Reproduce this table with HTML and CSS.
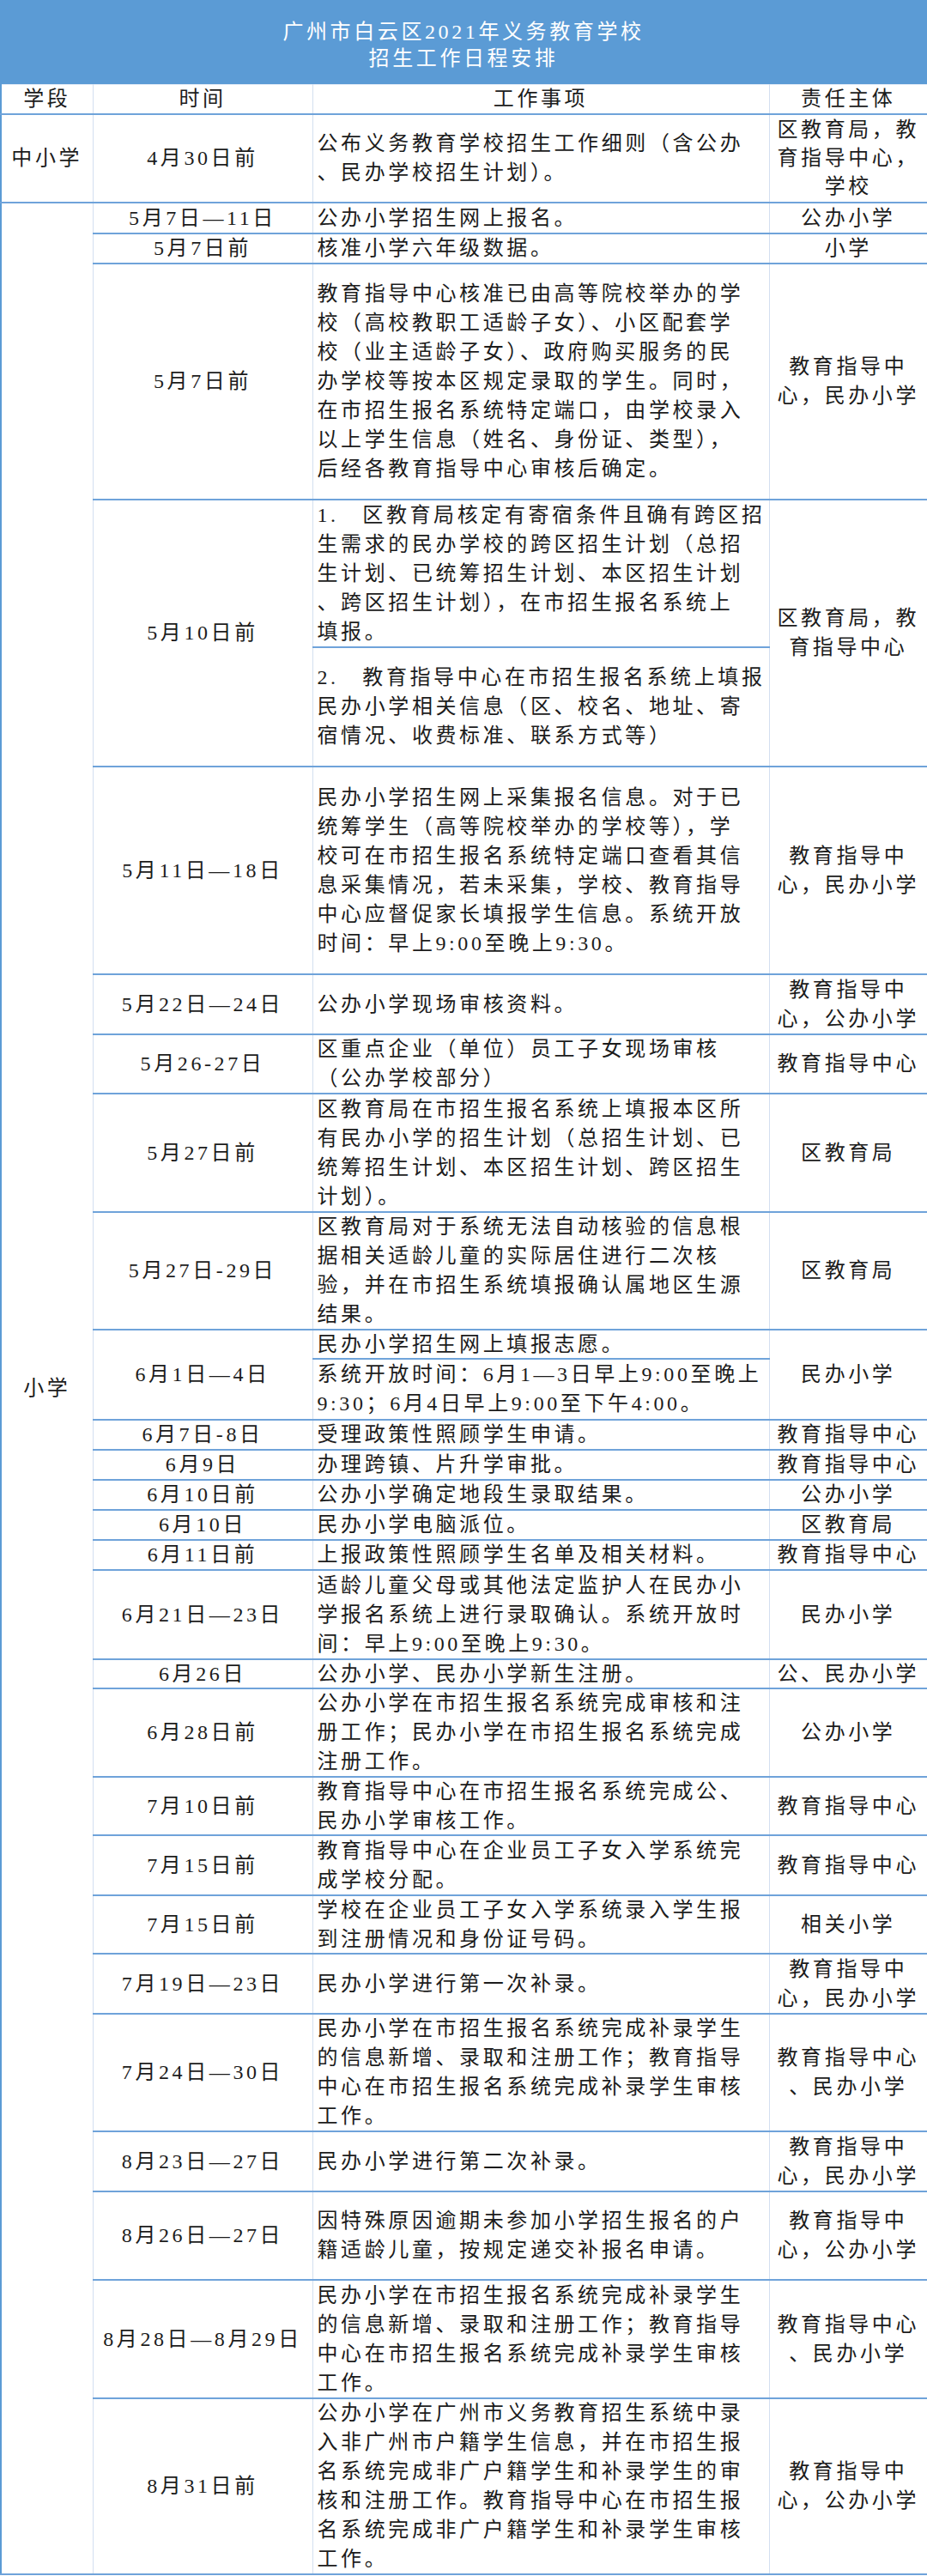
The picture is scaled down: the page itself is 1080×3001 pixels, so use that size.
FILE: index.html
```html
<!DOCTYPE html>
<html lang="zh-CN">
<head>
<meta charset="utf-8">
<title>广州市白云区2021年义务教育学校招生工作日程安排</title>
<link rel="stylesheet" href="styles.css">
</head>
<body>
<div class="page">
  <div class="banner">广州市白云区2021年义务教育学校<br>招生工作日程安排</div>
  <table class="schedule">
    <colgroup>
      <col class="c-stage"><col class="c-time"><col class="c-task"><col class="c-owner">
    </colgroup>
    <tbody>
      <tr class="h34 head"><td class="ctr"><div class="cell">学段</div></td><td class="ctr"><div class="cell">时间</div></td><td class="ctr"><div class="cell">工作事项</div></td><td class="ctr"><div class="cell">责任主体</div></td></tr>
      <tr class="h103"><td class="ctr stage"><div class="cell">中小学</div></td><td class="ctr"><div class="cell">4月30日前</div></td><td class="task"><div class="cell">公布义务教育学校招生工作细则（含公办<br>、民办学校招生计划）。</div></td><td class="ctr"><div class="cell owner">区教育局，教<br>育指导中心，<br>学校</div></td></tr>
      <tr class="h36"><td class="ctr stage" rowspan="29"><div class="cell">小学</div></td><td class="ctr"><div class="cell">5月7日—11日</div></td><td class="task"><div class="cell">公办小学招生网上报名。</div></td><td class="ctr"><div class="cell">公办小学</div></td></tr>
      <tr class="h35"><td class="ctr"><div class="cell">5月7日前</div></td><td class="task"><div class="cell">核准小学六年级数据。</div></td><td class="ctr"><div class="cell">小学</div></td></tr>
      <tr class="h275"><td class="ctr"><div class="cell">5月7日前</div></td><td class="task"><div class="cell">教育指导中心核准已由高等院校举办的学<br>校（高校教职工适龄子女）、小区配套学<br>校（业主适龄子女）、政府购买服务的民<br>办学校等按本区规定录取的学生。同时，<br>在市招生报名系统特定端口，由学校录入<br>以上学生信息（姓名、身份证、类型），<br>后经各教育指导中心审核后确定。</div></td><td class="ctr"><div class="cell">教育指导中<br>心，民办小学</div></td></tr>
      <tr class="h172"><td class="ctr" rowspan="2"><div class="cell">5月10日前</div></td><td class="task"><div class="cell">1.&emsp;区教育局核定有寄宿条件且确有跨区招<br>生需求的民办学校的跨区招生计划（总招<br>生计划、已统筹招生计划、本区招生计划<br>、跨区招生计划），在市招生报名系统上<br>填报。</div></td><td class="ctr" rowspan="2"><div class="cell">区教育局，教<br>育指导中心</div></td></tr>
      <tr class="h139"><td class="task"><div class="cell">2.&emsp;教育指导中心在市招生报名系统上填报<br>民办小学相关信息（区、校名、地址、寄<br>宿情况、收费标准、联系方式等）</div></td></tr>
      <tr class="h242"><td class="ctr"><div class="cell">5月11日—18日</div></td><td class="task"><div class="cell">民办小学招生网上采集报名信息。对于已<br>统筹学生（高等院校举办的学校等），学<br>校可在市招生报名系统特定端口查看其信<br>息采集情况，若未采集，学校、教育指导<br>中心应督促家长填报学生信息。系统开放<br>时间：早上9:00至晚上9:30。</div></td><td class="ctr"><div class="cell">教育指导中<br>心，民办小学</div></td></tr>
      <tr class="h70"><td class="ctr"><div class="cell">5月22日—24日</div></td><td class="task"><div class="cell">公办小学现场审核资料。</div></td><td class="ctr"><div class="cell">教育指导中<br>心，公办小学</div></td></tr>
      <tr class="h69"><td class="ctr"><div class="cell">5月26-27日</div></td><td class="task"><div class="cell">区重点企业（单位）员工子女现场审核<br>（公办学校部分）</div></td><td class="ctr"><div class="cell">教育指导中心</div></td></tr>
      <tr class="h138"><td class="ctr"><div class="cell">5月27日前</div></td><td class="task"><div class="cell">区教育局在市招生报名系统上填报本区所<br>有民办小学的招生计划（总招生计划、已<br>统筹招生计划、本区招生计划、跨区招生<br>计划）。</div></td><td class="ctr"><div class="cell">区教育局</div></td></tr>
      <tr class="h137"><td class="ctr"><div class="cell">5月27日-29日</div></td><td class="task"><div class="cell">区教育局对于系统无法自动核验的信息根<br>据相关适龄儿童的实际居住进行二次核<br>验，并在市招生系统填报确认属地区生源<br>结果。</div></td><td class="ctr"><div class="cell">区教育局</div></td></tr>
      <tr class="h34"><td class="ctr" rowspan="2"><div class="cell">6月1日—4日</div></td><td class="task"><div class="cell">民办小学招生网上填报志愿。</div></td><td class="ctr" rowspan="2"><div class="cell">民办小学</div></td></tr>
      <tr class="h71"><td class="task"><div class="cell">系统开放时间：6月1—3日早上9:00至晚上<br>9:30；6月4日早上9:00至下午4:00。</div></td></tr>
      <tr class="h35"><td class="ctr"><div class="cell">6月7日-8日</div></td><td class="task"><div class="cell">受理政策性照顾学生申请。</div></td><td class="ctr"><div class="cell">教育指导中心</div></td></tr>
      <tr class="h35"><td class="ctr"><div class="cell">6月9日</div></td><td class="task"><div class="cell">办理跨镇、片升学审批。</div></td><td class="ctr"><div class="cell">教育指导中心</div></td></tr>
      <tr class="h35"><td class="ctr"><div class="cell">6月10日前</div></td><td class="task"><div class="cell">公办小学确定地段生录取结果。</div></td><td class="ctr"><div class="cell">公办小学</div></td></tr>
      <tr class="h35"><td class="ctr"><div class="cell">6月10日</div></td><td class="task"><div class="cell">民办小学电脑派位。</div></td><td class="ctr"><div class="cell">区教育局</div></td></tr>
      <tr class="h35"><td class="ctr"><div class="cell">6月11日前</div></td><td class="task"><div class="cell">上报政策性照顾学生名单及相关材料。</div></td><td class="ctr"><div class="cell">教育指导中心</div></td></tr>
      <tr class="h104"><td class="ctr"><div class="cell">6月21日—23日</div></td><td class="task"><div class="cell">适龄儿童父母或其他法定监护人在民办小<br>学报名系统上进行录取确认。系统开放时<br>间：早上9:00至晚上9:30。</div></td><td class="ctr"><div class="cell">民办小学</div></td></tr>
      <tr class="h34"><td class="ctr"><div class="cell">6月26日</div></td><td class="task"><div class="cell">公办小学、民办小学新生注册。</div></td><td class="ctr"><div class="cell">公、民办小学</div></td></tr>
      <tr class="h103"><td class="ctr"><div class="cell">6月28日前</div></td><td class="task"><div class="cell">公办小学在市招生报名系统完成审核和注<br>册工作；民办小学在市招生报名系统完成<br>注册工作。</div></td><td class="ctr"><div class="cell">公办小学</div></td></tr>
      <tr class="h68"><td class="ctr"><div class="cell">7月10日前</div></td><td class="task"><div class="cell">教育指导中心在市招生报名系统完成公、<br>民办小学审核工作。</div></td><td class="ctr"><div class="cell">教育指导中心</div></td></tr>
      <tr class="h70"><td class="ctr"><div class="cell">7月15日前</div></td><td class="task"><div class="cell">教育指导中心在企业员工子女入学系统完<br>成学校分配。</div></td><td class="ctr"><div class="cell">教育指导中心</div></td></tr>
      <tr class="h68"><td class="ctr"><div class="cell">7月15日前</div></td><td class="task"><div class="cell">学校在企业员工子女入学系统录入学生报<br>到注册情况和身份证号码。</div></td><td class="ctr"><div class="cell">相关小学</div></td></tr>
      <tr class="h70"><td class="ctr"><div class="cell">7月19日—23日</div></td><td class="task"><div class="cell">民办小学进行第一次补录。</div></td><td class="ctr"><div class="cell">教育指导中<br>心，民办小学</div></td></tr>
      <tr class="h137"><td class="ctr"><div class="cell">7月24日—30日</div></td><td class="task"><div class="cell">民办小学在市招生报名系统完成补录学生<br>的信息新增、录取和注册工作；教育指导<br>中心在市招生报名系统完成补录学生审核<br>工作。</div></td><td class="ctr"><div class="cell">教育指导中心<br>、民办小学</div></td></tr>
      <tr class="h70"><td class="ctr"><div class="cell">8月23日—27日</div></td><td class="task"><div class="cell">民办小学进行第二次补录。</div></td><td class="ctr"><div class="cell">教育指导中<br>心，民办小学</div></td></tr>
      <tr class="h103"><td class="ctr"><div class="cell">8月26日—27日</div></td><td class="task"><div class="cell">因特殊原因逾期未参加小学招生报名的户<br>籍适龄儿童，按规定递交补报名申请。</div></td><td class="ctr"><div class="cell">教育指导中<br>心，公办小学</div></td></tr>
      <tr class="h138"><td class="ctr"><div class="cell">8月28日—8月29日</div></td><td class="task"><div class="cell">民办小学在市招生报名系统完成补录学生<br>的信息新增、录取和注册工作；教育指导<br>中心在市招生报名系统完成补录学生审核<br>工作。</div></td><td class="ctr"><div class="cell">教育指导中心<br>、民办小学</div></td></tr>
      <tr class="h205"><td class="ctr"><div class="cell">8月31日前</div></td><td class="task"><div class="cell">公办小学在广州市义务教育招生系统中录<br>入非广州市户籍学生信息，并在市招生报<br>名系统完成非广户籍学生和补录学生的审<br>核和注册工作。教育指导中心在市招生报<br>名系统完成非广户籍学生和补录学生审核<br>工作。</div></td><td class="ctr"><div class="cell">教育指导中<br>心，公办小学</div></td></tr>
    </tbody>
  </table>
</div>
</body>
</html>
```

FILE: styles.css
```css
html, body {
  margin: 0;
  padding: 0;
  background: #ffffff;
}

.page {
  width: 1080px;
  font-family: "Liberation Serif", "Noto Sans CJK SC", serif;
  color: #1c1c1c;
  font-size: 24px;
  letter-spacing: 3.6px;
}

.banner {
  box-sizing: border-box;
  height: 98px;
  padding-top: 22px;
  background: #5b9bd5;
  color: #ffffff;
  text-align: center;
  line-height: 31px;
}

.schedule {
  width: 1080px;
  table-layout: fixed;
  border-collapse: collapse;
  border-left: 2px solid #5b9bd5;
  border-right: 2px solid #5b9bd5;
  border-bottom: 2px solid #6fa3da;
}

.c-stage { width: 107px; }
.c-time { width: 256px; }
.c-task { width: 532px; }
.c-owner { width: 185px; }

.schedule td {
  padding: 0;
  line-height: 0;
  white-space: nowrap;
  vertical-align: middle;
  border-left: 1px solid #d3dff0;
  border-right: 1px solid #d3dff0;
  border-top: 2px solid #6fa3da;
  border-bottom: 2px solid #6fa3da;
}

/* the text block keeps its 34px leading but does not push the row taller */
.cell {
  line-height: 34px;
  margin: -6px 0;
}

.cell.owner {
  line-height: 33px;
}

.schedule .head td {
  border-top: 1px solid #e3ecf7;
}

.schedule .stage {
  border-left: 2px solid #5b9bd5;
}

.ctr {
  text-align: center;
}

.task {
  text-align: left;
}

.task .cell {
  padding-left: 5px;
}

.h34 { height: 34px; }
.h35 { height: 35px; }
.h36 { height: 36px; }
.h68 { height: 68px; }
.h69 { height: 69px; }
.h70 { height: 70px; }
.h71 { height: 71px; }
.h103 { height: 103px; }
.h104 { height: 104px; }
.h137 { height: 137px; }
.h138 { height: 138px; }
.h139 { height: 139px; }
.h172 { height: 172px; }
.h205 { height: 205px; }
.h242 { height: 242px; }
.h275 { height: 275px; }
```
